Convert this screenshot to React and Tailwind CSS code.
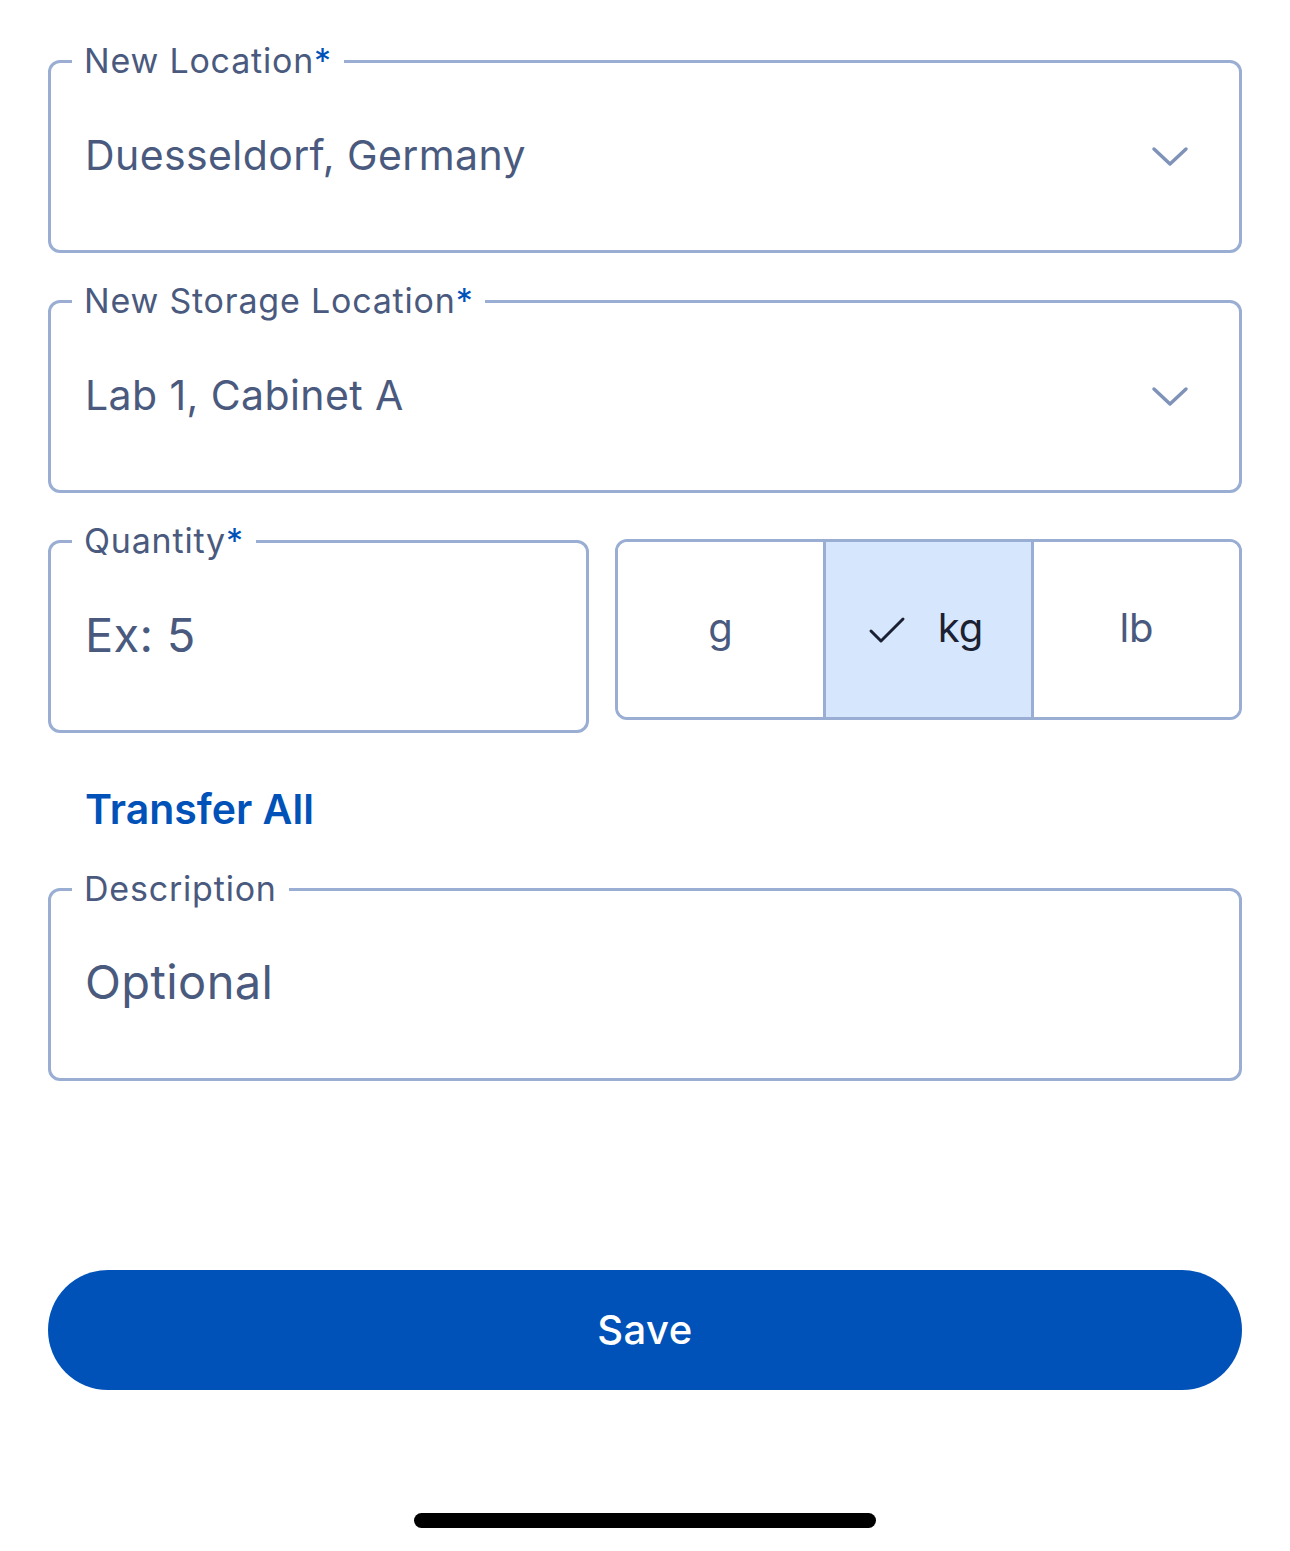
import { useState } from 'react';

const FONT = { fontFamily: 'Inter, "Noto Sans", "Liberation Sans", sans-serif' };

function Chevron() {
  return (
    <svg width="38" height="22" viewBox="0 0 38 22" fill="none" className="shrink-0">
      <polyline
        points="3,3 19,18 35,3"
        stroke="#7f92b8"
        strokeWidth="3.5"
        strokeLinecap="round"
        strokeLinejoin="round"
      />
    </svg>
  );
}

function Field({ label, required, children, className = '' }) {
  return (
    <fieldset className={`border-[3px] border-[#9aadd3] rounded-[12px] ${className}`}>
      <legend className="ml-[21px] px-[12px] text-[34px] leading-[40px] text-[#4a5a7e] tracking-[0.8px]">
        {label}
        {required && <span className="text-[#0052b8]">*</span>}
      </legend>
      {children}
    </fieldset>
  );
}

function SelectField({ label, value }) {
  return (
    <Field label={label} required>
      <div className="h-[169px] pt-[50px] pl-[34px] pr-[50px] flex items-start justify-between">
        <span className="text-[41px] leading-[48px] text-[#4a5a7e] tracking-[0.4px]">{value}</span>
        <span className="mt-[15px]">
          <Chevron />
        </span>
      </div>
    </Field>
  );
}

const UNITS = ['g', 'kg', 'lb'];

export default function App() {
  const [unit, setUnit] = useState('kg');

  return (
    <div style={FONT} className="w-[1290px] h-[1551px] bg-white px-12 pt-[41px] flex flex-col">
      <SelectField label="New Location" value="Duesseldorf, Germany" />

      <div className="mt-[28px]">
        <SelectField label="New Storage Location" value="Lab 1, Cabinet A" />
      </div>

      {/* Quantidade + unidade */}
      <div className="mt-[28px] flex gap-[26px] items-start">
        <Field label="Quantity" required className="w-[541px]">
          <div className="h-[169px] pt-[47px] pl-[34px]">
            <span className="text-[47px] leading-[54px] text-[#4a5a7e] tracking-[0.3px]">Ex: 5</span>
          </div>
        </Field>

        <div className="mt-[18px] flex-1 h-[181px] border-[3px] border-[#9aadd3] rounded-[12px] overflow-hidden flex">
          {UNITS.map((u, i) => (
            <button
              key={u}
              type="button"
              onClick={() => setUnit(u)}
              className={`flex-1 flex items-center justify-center gap-[32px] ${
                i > 0 ? 'border-l-[3px] border-[#9aadd3]' : ''
              } ${unit === u ? 'bg-[#d6e7fd] text-[#1b2132]' : 'bg-white text-[#4a5a7e]'}`}
            >
              {unit === u && (
                <svg width="38" height="28" viewBox="0 0 38 28" fill="none" className="-ml-[6px]">
                  <polyline
                    points="3,15 13,25 35,3"
                    stroke="#1b2132"
                    strokeWidth="3"
                    strokeLinecap="round"
                    strokeLinejoin="round"
                  />
                </svg>
              )}
              <span className="text-[40px] leading-[48px] -mt-[4px]">{u}</span>
            </button>
          ))}
        </div>
      </div>

      <button
        type="button"
        className="self-start ml-[37px] mt-[50px] text-[41px] leading-[52px] font-semibold text-[#0052b8]"
      >
        Transfer All
      </button>

      <div className="mt-[34px]">
        <Field label="Description">
          <div className="h-[169px] pt-[45px] pl-[34px]">
            <span className="text-[47px] leading-[56px] text-[#4a5a7e] tracking-[0.4px]">Optional</span>
          </div>
        </Field>
      </div>

      <button
        type="button"
        className="mt-[189px] h-[120px] w-full rounded-full bg-[#0052b8] text-white text-[40px] font-medium tracking-[0.5px]"
      >
        Save
      </button>

      <div className="mt-[123px] self-center w-[462px] h-[15px] rounded-full bg-black" />
    </div>
  );
}
